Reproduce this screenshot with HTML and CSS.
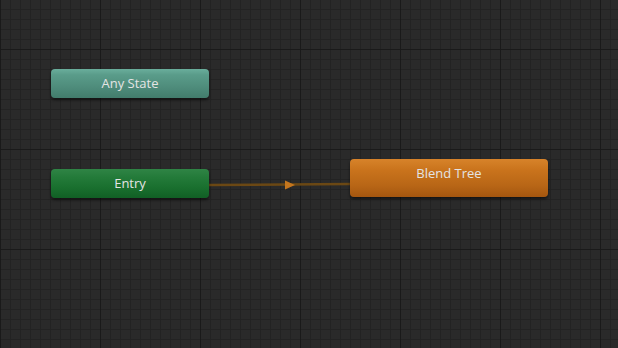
FILE: index.html
```html
<!DOCTYPE html>
<html lang="en">
<head>
    <meta charset="UTF-8">
    <meta name="viewport" content="width=device-width, initial-scale=1.0">
    <title>Animator</title>
    <link rel="stylesheet" href="styles.css">
</head>
<body>
    <div class="graph">
        <svg class="links" width="618" height="348" viewBox="0 0 618 348">
            <line x1="209" y1="185" x2="350" y2="184" stroke="#6b4814" stroke-width="2.5"/>
            <polygon points="285,180.5 295,185 285,189.5" fill="#c4761e"/>
        </svg>
        <div class="node any-state">Any State</div>
        <div class="node entry">Entry</div>
        <div class="node blend-tree">Blend Tree</div>
    </div>
</body>
</html>
```

FILE: styles.css
```css
body {
    margin: 0;
    padding: 0;
    background: #2a2a2a;
    font-family: "Open Sans", "DejaVu Sans", sans-serif;
}

.graph {
    position: relative;
    width: 618px;
    height: 348px;
    overflow: hidden;
    background-color: #2a2a2a;
    background-image:
        linear-gradient(to right, #1a1a1a 1px, transparent 1px),
        linear-gradient(to bottom, #1a1a1a 1px, transparent 1px),
        linear-gradient(to right, #232323 1px, transparent 1px),
        linear-gradient(to bottom, #232323 1px, transparent 1px);
    background-size: 100px 100px, 100px 100px, 10px 10px, 10px 10px;
    background-position: 0 0, 0 49px, 0 0, 0 9px;
}

.links {
    position: absolute;
    left: 0;
    top: 0;
}

.node {
    position: absolute;
    box-sizing: border-box;
    border-radius: 4px;
    color: #e4e4e4;
    font-size: 13px;
    text-align: center;
    box-shadow: 0 2px 3px rgba(0, 0, 0, 0.55);
}

.any-state {
    left: 51px;
    top: 69px;
    width: 158px;
    height: 29px;
    line-height: 29px;
    background: linear-gradient(to bottom, #6aae9c 0%, #5a9c8a 20%, #4f8d7c 60%, #427c6c 100%);
}

.entry {
    left: 51px;
    top: 169px;
    width: 158px;
    height: 29px;
    line-height: 29px;
    background: linear-gradient(to bottom, #2f8445 0%, #237a39 30%, #196f2e 65%, #115f25 100%);
}

.blend-tree {
    left: 350px;
    top: 159px;
    width: 198px;
    height: 38px;
    padding-top: 5px;
    line-height: 18px;
    background: linear-gradient(to bottom, #d7832a 0%, #c9731c 30%, #b86616 70%, #a4560f 100%);
}
```
